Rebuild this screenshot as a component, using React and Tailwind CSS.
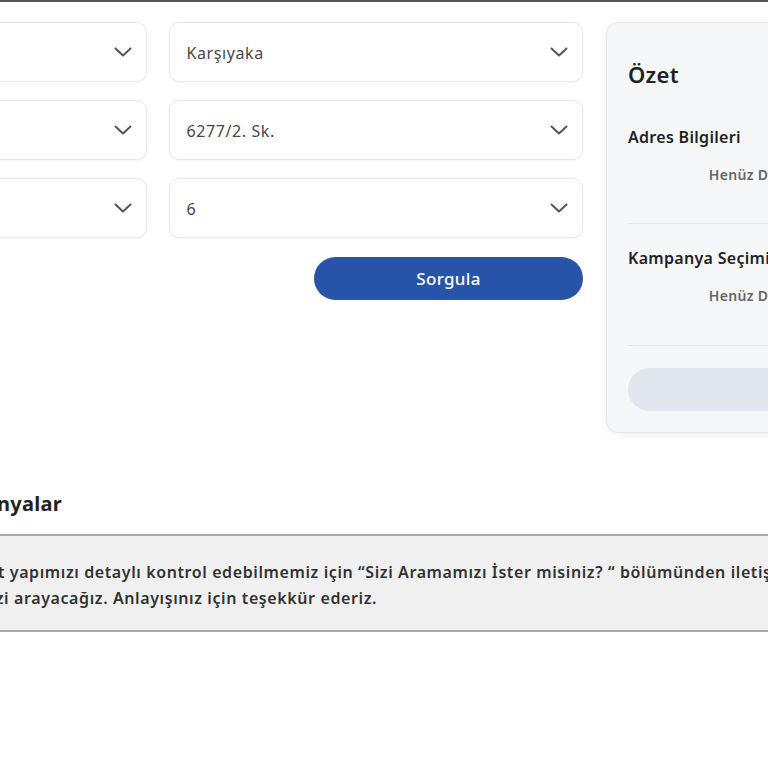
import { useState } from 'react';

const Chevron = () => (
  <svg width="18" height="10" viewBox="0 0 18 10" fill="none">
    <path d="M1.5 1.5L9 8.5L16.5 1.5" stroke="#555" strokeWidth="2" strokeLinecap="round" strokeLinejoin="round" />
  </svg>
);

function SelectBox({ value }) {
  return (
    <div className="h-[60px] rounded-[10px] border border-[#e8e8e8] bg-white shadow-[0_1px_2px_rgba(0,0,0,0.03)] flex items-center justify-between pl-[17px] pr-[14px]">
      <span className="text-[16px] leading-[24px] mt-[2px] tracking-[0.6px] text-[#474747]">{value}</span>
      <Chevron />
    </div>
  );
}

export default function App() {
  const [fields] = useState([
    ['İzmir', 'Karşıyaka'],
    ['Bahçelievler Mah.', '6277/2. Sk.'],
    ['12', '6'],
  ]);

  return (
    <div className="h-[768px] overflow-hidden bg-white border-t-2 border-[#555] font-['Noto_Sans',sans-serif]">
      {/* Form + Özet */}
      <div className="flex items-start ml-[-268px] pt-[20px]">
        <div className="w-[851px] shrink-0">
          <div className="grid grid-cols-2 gap-x-[22px] gap-y-[18px]">
            {fields.map(([left, right]) => (
              <>
                <SelectBox key={left} value={left} />
                <SelectBox key={right} value={right} />
              </>
            ))}
          </div>
          <div className="flex justify-end mt-[19px]">
            <button className="w-[269px] h-[43px] rounded-full bg-[#2754a8] text-white text-[17px] font-medium tracking-[0.3px]">
              Sorgula
            </button>
          </div>
        </div>

        <div className="ml-[23px] w-[352px] shrink-0 rounded-[12px] border border-[#e6e8ec] bg-[#f6f7f9] shadow-[0_2px_8px_rgba(0,0,0,0.06)] px-[21px] pt-[37px] pb-[21px]">
          <h2 className="text-[22px] leading-[28px] font-semibold tracking-[0.3px] text-[#222]">Özet</h2>

          <div className="mt-[37px] pb-[38px] border-b border-[#e6e7ea]">
            <h3 className="text-[16px] leading-[24px] font-semibold tracking-[0.3px] text-[#222]">Adres Bilgileri</h3>
            <p className="mt-[16px] text-center text-[14px] leading-[20px] font-semibold tracking-[0.3px] text-[#666]">Henüz Doldurulmadı</p>
          </div>

          <div className="pt-[22px] pb-[39px] border-b border-[#e6e7ea]">
            <h3 className="text-[16px] leading-[24px] font-semibold tracking-[0.3px] text-[#222]">Kampanya Seçimi</h3>
            <p className="mt-[16px] text-center text-[14px] leading-[20px] font-semibold tracking-[0.3px] text-[#666]">Henüz Doldurulmadı</p>
          </div>

          <div className="mt-[22px] w-full h-[43px] rounded-full bg-[#e2e6ee]" />
        </div>
      </div>

      {/* Kampanyalar */}
      <div className="mt-[57px]">
        <div className="w-[62px] flex justify-end whitespace-nowrap">
          <h2 className="text-[20px] leading-[28px] font-bold tracking-[0.3px] text-[#222]">Kampanyalar</h2>
        </div>
        <div className="mt-[16px] border-y-2 border-[#aaa] bg-[#f0f0f0] pt-[23px] pb-[19px] text-[16px] leading-[26px] font-semibold tracking-[0.6px] text-[#333] whitespace-nowrap">
          <div className="flex">
            <div className="w-[5px] flex justify-end shrink-0">
              <span>Adresinizdeki internet</span>
            </div>
            <span>&nbsp;yapımızı detaylı kontrol edebilmemiz için “Sizi Aramamızı İster misiniz? “ bölümünden iletişim bilgilerinizi bırakmanız durumunda</span>
          </div>
          <div className="w-[377px] flex justify-end">
            <span>sizi arayacağız. Anlayışınız için teşekkür ederiz.</span>
          </div>
        </div>
      </div>
    </div>
  );
}
